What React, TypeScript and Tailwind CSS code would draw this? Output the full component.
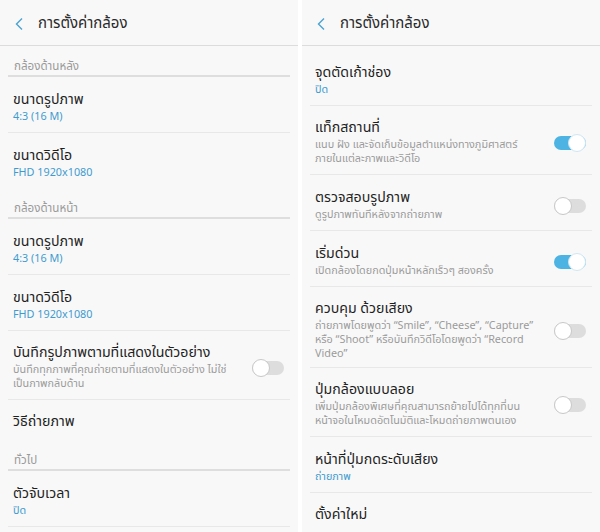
import React from 'react';

const FONT = { fontFamily: '"Noto Sans Thai", Roboto, "Noto Sans", sans-serif' };

type Item = {
  title: string;
  sub?: React.ReactNode;
  lines?: number;
  blue?: boolean;
  toggle?: 'on' | 'off';
  divider?: boolean;
};

type Block = { section: string } | Item;

const leftBlocks: Block[] = [
  { section: 'กล้องด้านหลัง' },
  { title: 'ขนาดรูปภาพ', sub: '4:3 (16 M)', blue: true, divider: true },
  { title: 'ขนาดวิดีโอ', sub: 'FHD 1920x1080', blue: true },
  { section: 'กล้องด้านหน้า' },
  { title: 'ขนาดรูปภาพ', sub: '4:3 (16 M)', blue: true, divider: true },
  { title: 'ขนาดวิดีโอ', sub: 'FHD 1920x1080', blue: true, divider: true },
  {
    title: 'บันทึกรูปภาพตามที่แสดงในตัวอย่าง',
    sub: (
      <>
        บันทึกทุกภาพที่คุณถ่ายตามที่แสดงในตัวอย่าง ไม่ใช่
        <br />
        เป็นภาพกลับด้าน
      </>
    ),
    lines: 2,
    toggle: 'off',
    divider: true,
  },
  { title: 'วิธีถ่ายภาพ' },
  { section: 'ทั่วไป' },
  { title: 'ตัวจับเวลา', sub: 'ปิด', blue: true, divider: true },
];

const rightBlocks: Item[] = [
  { title: 'จุดตัดเก้าช่อง', sub: 'ปิด', blue: true, divider: true },
  {
    title: 'แท็กสถานที่',
    sub: (
      <>
        แนบ ฝัง และจัดเก็บข้อมูลตำแหน่งทางภูมิศาสตร์
        <br />
        ภายในแต่ละภาพและวิดีโอ
      </>
    ),
    lines: 2,
    toggle: 'on',
    divider: true,
  },
  { title: 'ตรวจสอบรูปภาพ', sub: 'ดูรูปภาพทันทีหลังจากถ่ายภาพ', toggle: 'off', divider: true },
  { title: 'เริ่มด่วน', sub: 'เปิดกล้องโดยกดปุ่มหน้าหลักเร็วๆ สองครั้ง', toggle: 'on', divider: true },
  {
    title: 'ควบคุม ด้วยเสียง',
    sub: (
      <>
        ถ่ายภาพโดยพูดว่า “Smile”, “Cheese”, “Capture”
        <br />
        หรือ “Shoot” หรือบันทึกวิดีโอโดยพูดว่า “Record
        <br />
        Video”
      </>
    ),
    lines: 3,
    toggle: 'off',
    divider: true,
  },
  {
    title: 'ปุ่มกล้องแบบลอย',
    sub: (
      <>
        เพิ่มปุ่มกล้องพิเศษที่คุณสามารถย้ายไปได้ทุกที่บน
        <br />
        หน้าจอในโหมดอัตโนมัติและโหมดถ่ายภาพตนเอง
      </>
    ),
    lines: 2,
    toggle: 'off',
    divider: true,
  },
  { title: 'หน้าที่ปุ่มกดระดับเสียง', sub: 'ถ่ายภาพ', blue: true, divider: true },
  { title: 'ตั้งค่าใหม่' },
];

export default function App() {
  return (
    <div className="flex h-[532px] w-[600px] overflow-hidden bg-white" style={FONT}>
      <Panel className="w-[298px]">
        {leftBlocks.map((b, i) =>
          'section' in b ? <SectionHeader key={i} label={b.section} /> : <Row key={i} item={b} />
        )}
      </Panel>
      <div className="w-[4px] shrink-0 bg-white" />
      <Panel className="w-[298px]">
        {/* scrolled list: divider of the row above */}
        <div className="mx-2 mt-[4px] h-px bg-[#e8e8e8]" />
        {rightBlocks.map((b, i) => (
          <Row key={i} item={b} />
        ))}
      </Panel>
    </div>
  );
}

function Panel({ className, children }: { className: string; children: React.ReactNode }) {
  return (
    <div className={`flex shrink-0 flex-col bg-[#f8f8f8] ${className}`}>
      {/* Header */}
      <div className="flex h-[46px] shrink-0 items-center border-b border-[#dcdcdc] pl-[14px]">
        <svg width="10" height="14" viewBox="0 0 10 14" className="mt-[2px]">
          <path d="M8 1.5 L2.5 7 L8 12.5" fill="none" stroke="#4aa3d2" strokeWidth="1.4" />
        </svg>
        <span className="mt-[2px] ml-[14px] text-[15px] leading-none text-[#2a2a2a]">การตั้งค่ากล้อง</span>
      </div>
      {children}
    </div>
  );
}

function SectionHeader({ label }: { label: string }) {
  return (
    <div className="mx-2 border-b-2 border-[#dedede] pt-[13px] pl-[6px]">
      <span className="block text-[11.6px] leading-[16px] text-[#9a9a9a]">{label}</span>
    </div>
  );
}

function Row({ item }: { item: Item }) {
  const pad = !item.sub
    ? 'pt-[13px] pb-[9px]'
    : item.lines === 3
      ? 'pt-[13px] pb-[6px]'
      : item.lines === 2
        ? 'pt-[13px] pb-[8px]'
        : 'pt-[14px] pb-[8px]';

  return (
    <div>
      <div className={`flex items-center pl-[13px] pr-[14px] ${pad}`}>
        <div className="min-w-0 flex-1">
          <p className="text-[14.2px] leading-[18px] text-[#1f1f1f]">{item.title}</p>
          {item.sub && (
            <p
              className={`mt-[1px] text-[10.8px] leading-[14px] ${
                item.blue ? 'text-[#3f9bcf]' : 'text-[#9b9b9b]'
              }`}
            >
              {item.sub}
            </p>
          )}
        </div>
        {item.toggle && <Toggle on={item.toggle === 'on'} />}
      </div>
      {item.divider && <div className="mx-2 h-px bg-[#e8e8e8]" />}
    </div>
  );
}

function Toggle({ on }: { on: boolean }) {
  return (
    <div className="relative ml-2 h-[18px] w-[32px] shrink-0">
      <div
        className={`absolute top-[2px] left-0 h-[14px] w-[32px] rounded-full ${
          on ? 'bg-[#4db3e2]' : 'bg-[#dddddd]'
        }`}
      />
      <div
        className={`absolute top-0 h-[18px] w-[18px] rounded-full border bg-white ${
          on ? 'right-0 border-[#cfe7f3]' : 'left-0 border-[#c8c8c8]'
        }`}
      />
    </div>
  );
}
